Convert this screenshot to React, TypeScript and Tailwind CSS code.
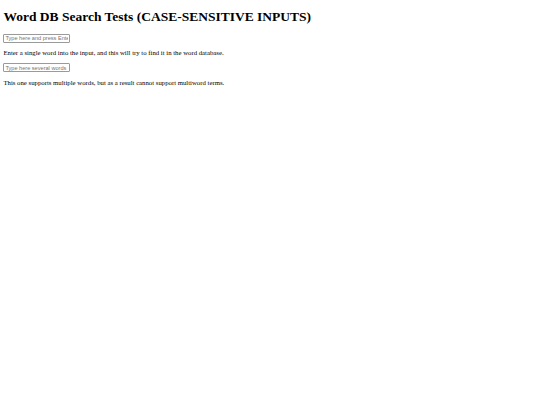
import { useState } from 'react'

function App() {
    const [single, setSingle] = useState('')
    const [multi, setMulti] = useState('')

    return (
        <div className="min-h-[405px] bg-white px-[3.4px] text-black" style={{ fontFamily: '"Liberation Serif", "Times New Roman", serif' }}>
            <h1 className="m-0 pt-[9px] pb-[9px] text-[13.5px] font-bold leading-[15.5px]">
                Word DB Search Tests (CASE-SENSITIVE INPUTS)
            </h1>

            <div className="flex h-[9px] items-center">
                <input
                    value={single}
                    onChange={(e) => setSingle(e.target.value)}
                    placeholder="Type here and press Enter"
                    className="box-border h-[9px] w-[67px] rounded-[1px] border border-[#9a9a9a] px-[1px] py-0 text-[5.6px] leading-[7px] placeholder:text-[#757575] outline-none"
                    style={{ fontFamily: '"Liberation Sans", Arial, sans-serif' }}
                />
            </div>
            <p className="my-[6.5px] text-[6.75px] leading-[7.8px]">
                Enter a single word into the input, and this will try to find it in the word database.
            </p>

            <div className="flex h-[9px] items-center">
                <input
                    value={multi}
                    onChange={(e) => setMulti(e.target.value)}
                    placeholder="Type here several words"
                    className="box-border h-[9px] w-[67px] rounded-[1px] border border-[#9a9a9a] px-[1px] py-0 text-[5.6px] leading-[7px] placeholder:text-[#757575] outline-none"
                    style={{ fontFamily: '"Liberation Sans", Arial, sans-serif' }}
                />
            </div>
            <p className="my-[6.5px] text-[6.75px] leading-[7.8px]">
                This one supports multiple words, but as a result cannot support multiword terms.
            </p>
        </div>
    )
}

export default App
